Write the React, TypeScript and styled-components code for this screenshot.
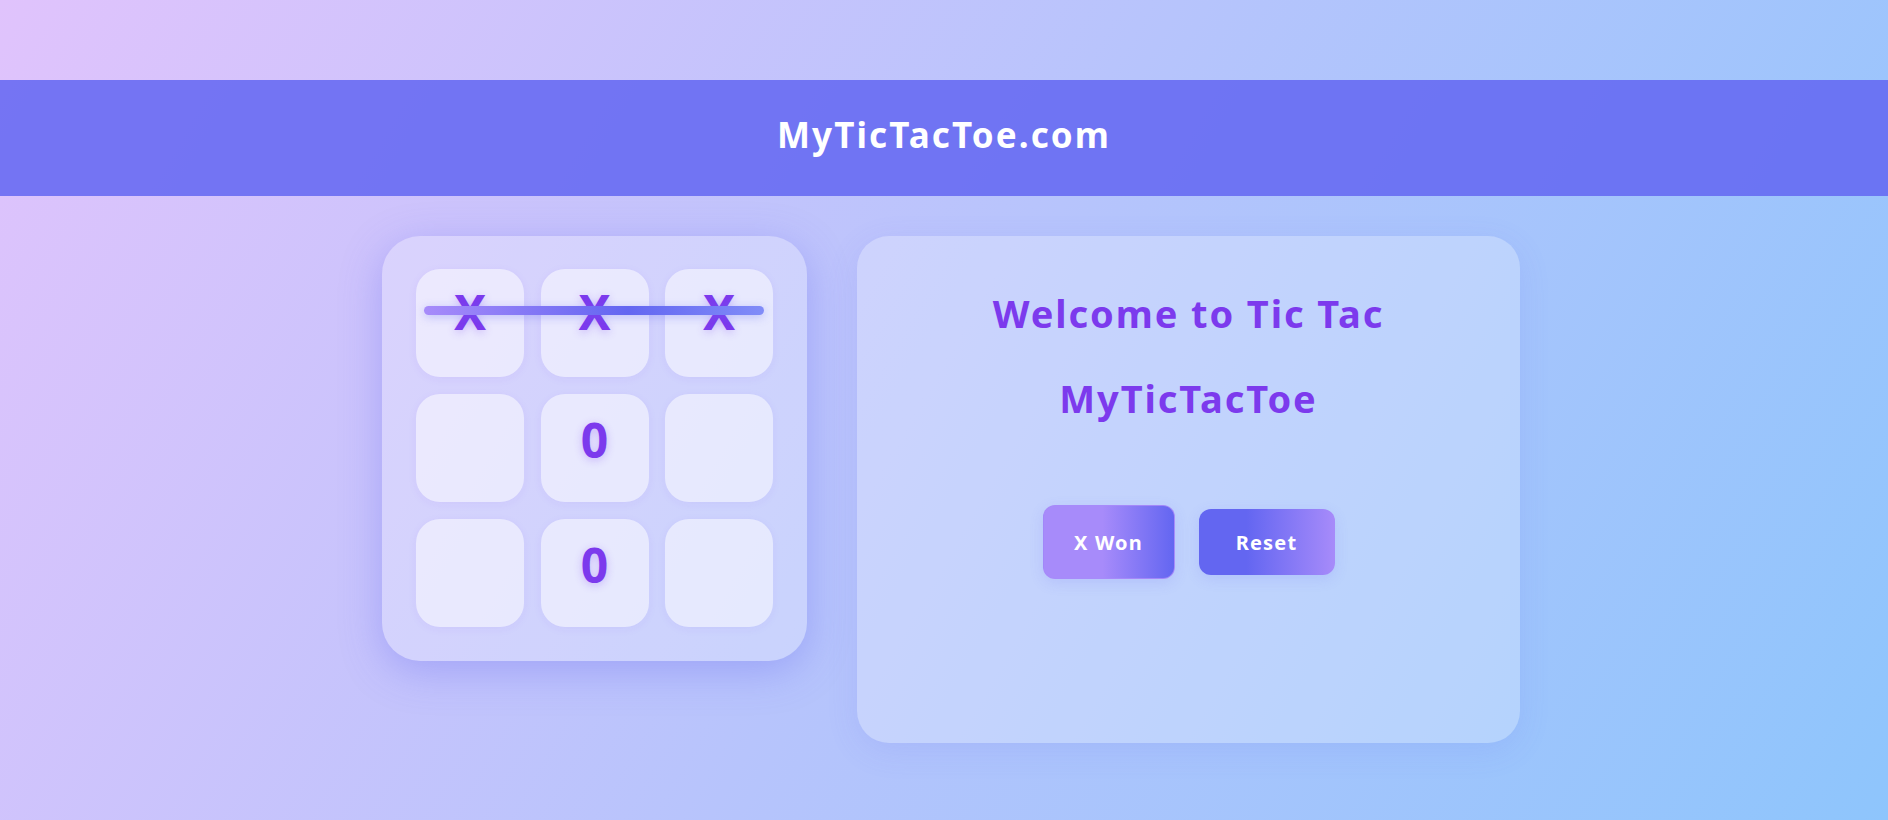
import React from "react";
import styled, { createGlobalStyle } from "styled-components";

const Global = createGlobalStyle`
  html, body { margin: 0; padding: 0; }
  body {
    font-family: "Noto Sans", "Open Sans", sans-serif;
    background: linear-gradient(120deg, #e0c3fc 0%, #8ec5fc 100%);
    min-height: 100vh;
  }
`;

const Page = styled.div`
  min-height: 100vh;
  padding-top: 80px;
  box-sizing: border-box;
`;

const Header = styled.header`
  height: 116px;
  background: rgba(99, 102, 241, 0.86);
  display: flex;
  align-items: center;
  justify-content: center;
  padding-bottom: 8px;
  box-sizing: border-box;
`;

const Brand = styled.h1`
  margin: 0;
  color: #ffffff;
  font-size: 35px;
  font-weight: 700;
  letter-spacing: 2.1px;
`;

const Main = styled.main`
  display: flex;
  justify-content: center;
  align-items: flex-start;
  gap: 50px;
  padding: 40px 0 0 14px;
`;

const Board = styled.div`
  position: relative;
  display: grid;
  grid-template-columns: repeat(3, 108px);
  grid-auto-rows: 108px;
  column-gap: 16.5px;
  row-gap: 17px;
  padding: 33px 34px 34px;
  border-radius: 38px;
  background: rgba(255, 255, 255, 0.25);
  box-shadow: 0 10px 40px rgba(99, 102, 241, 0.35);
`;

const Cell = styled.div`
  border-radius: 24px;
  background: rgba(255, 255, 255, 0.5);
  box-shadow: 0 2px 10px rgba(124, 58, 237, 0.06);
  display: flex;
  align-items: center;
  justify-content: center;
  padding-bottom: 17px;
  box-sizing: border-box;
  font-size: 48px;
  font-weight: 700;
  color: #7c3aed;
  text-shadow: 0 2px 8px rgba(124, 58, 237, 0.3);
`;

const Mark = styled.span<{ $lift: number }>`
  display: block;
  transform: translateY(${(p) => -p.$lift}px);
`;

const WinLine = styled.div`
  position: absolute;
  left: 42px;
  top: 70px;
  width: 340px;
  height: 9px;
  border-radius: 5px;
  background: linear-gradient(90deg, #a78bfa 0%, #6366f1 60%, #818cf8 100%);
  box-shadow: 0 2px 10px rgba(99, 102, 241, 0.35);
`;

const Panel = styled.section`
  width: 663px;
  height: 507px;
  box-sizing: border-box;
  padding-top: 35px;
  border-radius: 32px;
  background: rgba(255, 255, 255, 0.25);
  box-shadow: 0 8px 32px rgba(99, 102, 241, 0.12);
  display: flex;
  flex-direction: column;
  align-items: center;
`;

const Title = styled.h2`
  margin: 0;
  color: #7c3aed;
  font-size: 38px;
  font-weight: 700;
  line-height: 85px;
  letter-spacing: 1.9px;
  text-align: center;
`;

const Actions = styled.div`
  display: flex;
  align-items: center;
  gap: 24px;
  margin-top: 64px;
`;

const Button = styled.button<{ $variant: "status" | "reset" }>`
  font-family: inherit;
  font-size: 20px;
  font-weight: 700;
  letter-spacing: 1.2px;
  color: #ffffff;
  border-radius: 12px;
  cursor: pointer;
  box-sizing: border-box;
  padding: 0;
  width: ${(p) => (p.$variant === "status" ? "132px" : "136px")};
  height: ${(p) => (p.$variant === "status" ? "74px" : "66px")};
  border: ${(p) =>
    p.$variant === "status" ? "1px solid rgba(167, 139, 250, 0.9)" : "none"};
  background: ${(p) =>
    p.$variant === "status"
      ? "linear-gradient(90deg, #a78bfa 0%, #a78bfa 45%, #6366f1 100%)"
      : "linear-gradient(90deg, #6366f1 0%, #6366f1 35%, #a78bfa 100%)"};
  box-shadow: 0 4px 14px rgba(99, 102, 241, 0.15);
`;

const cells = ["X", "X", "X", "", "0", "", "", "0", ""];

export default function App() {
  return (
    <>
      <Global />
      <Page>
        <Header>
          <Brand>MyTicTacToe.com</Brand>
        </Header>
        <Main>
          <Board>
            {cells.map((c, i) => (
              <Cell key={i}>
                {c && <Mark $lift={c === "X" ? 3 : 0}>{c}</Mark>}
              </Cell>
            ))}
            <WinLine />
          </Board>
          <Panel>
            <Title>
              Welcome to Tic Tac
              <br />
              MyTicTacToe
            </Title>
            <Actions>
              <Button $variant="status">X Won</Button>
              <Button $variant="reset">Reset</Button>
            </Actions>
          </Panel>
        </Main>
      </Page>
    </>
  );
}
